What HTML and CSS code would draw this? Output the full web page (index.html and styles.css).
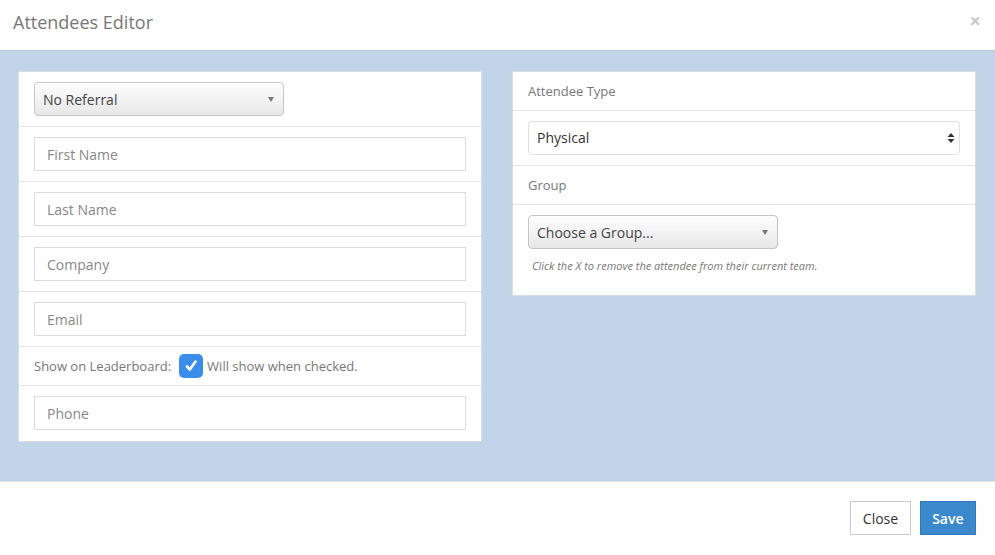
FILE: index.html
```html
<!DOCTYPE html>
<html>
<head lang="en">
    <meta charset="UTF-8">
    <title>Attendees Editor</title>
    <link rel="stylesheet" href="styles.css">
</head>
<body>
<div class="modal">
    <div class="modalHeader">
        <h4 class="modalTitle">Attendees Editor</h4>
        <span class="closeX">&times;</span>
    </div>
    <div class="modalBody">
        <div class="panel leftPanel">
            <div class="row selectRow">
                <div class="fakeSelect referral">No Referral<span class="caret"></span></div>
            </div>
            <div class="row"><div class="input">First Name</div></div>
            <div class="row"><div class="input">Last Name</div></div>
            <div class="row"><div class="input">Company</div></div>
            <div class="row"><div class="input">Email</div></div>
            <div class="row checkRow">
                <span>Show on Leaderboard:</span>
                <span class="checkbox">
                    <svg width="14" height="14" viewBox="0 0 14 14"><path d="M3 7.5 L5.8 10.5 L11.5 2.5" fill="none" stroke="#fff" stroke-width="2.6" stroke-linecap="round" stroke-linejoin="round"/></svg>
                </span>
                <span>Will show when checked.</span>
            </div>
            <div class="row"><div class="input">Phone</div></div>
        </div>
        <div class="panel rightPanel">
            <div class="labelRow">Attendee Type</div>
            <div class="row">
                <div class="nativeSelect">Physical
                    <svg class="updown" width="8" height="12" viewBox="0 0 8 12"><path d="M4 1 L7.5 5 H0.5 Z M4 11 L7.5 7 H0.5 Z" fill="#333"/></svg>
                </div>
            </div>
            <div class="labelRow">Group</div>
            <div class="row groupRow">
                <div class="fakeSelect group">Choose a Group...<span class="caret"></span></div>
                <p class="help">Click the X to remove the attendee from their current team.</p>
            </div>
        </div>
    </div>
    <div class="modalFooter">
        <button class="btn btnDefault">Close</button>
        <button class="btn btnPrimary">Save</button>
    </div>
</div>
</body>
</html>
```

FILE: styles.css
```css
*{
    margin: 0;
    padding: 0;
    box-sizing: border-box;
}
body{
    font-family: "Open Sans", "Liberation Sans", sans-serif;
    color: #555;
    background: #fff;
    width: 995px;
    height: 555px;
    overflow: hidden;
}
.modalHeader{
    height: 50px;
    display: flex;
    align-items: center;
    justify-content: space-between;
    padding: 0 14px 6px 13px;
}
.modalTitle{
    font-size: 18px;
    font-weight: normal;
    color: #777;
}
.closeX{
    color: #c8c8c8;
    font-size: 20px;
    font-weight: bold;
    margin-top: -4px;
}
.modalBody{
    height: 431px;
    background: #c2d4e8;
    border-top: 1px solid #b5c8de;
    display: flex;
    align-items: flex-start;
    gap: 30px;
    padding: 20px 19px 0 18px;
}
.panel{
    width: 464px;
    background: #fff;
    border: 1px solid #d6dde6;
}
.row{
    height: 55px;
    padding: 10px 15px 0 15px;
    border-bottom: 1px solid #e5e5e5;
}
.row:last-child{
    border-bottom: none;
}
.input{
    height: 34px;
    border: 1px solid #ddd;
    padding: 1px 12px 0;
    line-height: 32px;
    font-size: 14px;
    color: #888;
}
.fakeSelect{
    position: relative;
    height: 34px;
    width: 250px;
    border: 1px solid #c5c5c5;
    border-radius: 4px;
    background: linear-gradient(#fdfdfd 0%, #f3f3f3 50%, #e6e6e6 100%);
    padding: 1px 8px 0;
    line-height: 32px;
    font-size: 14px;
    color: #444;
}
.caret{
    position: absolute;
    right: 9px;
    top: 14px;
    border-left: 3.5px solid transparent;
    border-right: 3.5px solid transparent;
    border-top: 5px solid #777;
}
.checkRow{
    height: 39px;
    padding-top: 0;
    display: flex;
    align-items: center;
    font-size: 13px;
    color: #777;
}
.checkbox{
    width: 24px;
    height: 24px;
    margin: 0 4px 0 8px;
    border-radius: 5px;
    background: #3b8deb;
    display: flex;
    align-items: center;
    justify-content: center;
}
.labelRow{
    height: 39px;
    line-height: 38px;
    padding: 0 15px;
    font-size: 13px;
    color: #777;
    border-bottom: 1px solid #e5e5e5;
}
.nativeSelect{
    position: relative;
    height: 34px;
    border: 1px solid #e0e0e0;
    border-radius: 4px;
    padding: 0 8px;
    line-height: 32px;
    font-size: 14px;
    color: #333;
}
.updown{
    position: absolute;
    right: 4px;
    top: 10px;
}
.groupRow{
    height: 90px;
}
.help{
    margin-top: 9px;
    padding-left: 4px;
    font-size: 11px;
    font-style: italic;
    color: #777;
}
.modalFooter{
    height: 74px;
    border-top: 1px solid #e5e5e5;
    display: flex;
    justify-content: flex-end;
    align-items: flex-start;
    gap: 9px;
    padding: 19px 19px 0 0;
}
.btn{
    height: 34px;
    padding: 0 11.5px;
    font-family: "Open Sans", "Liberation Sans", sans-serif;
    font-size: 14px;
    border-radius: 0;
    cursor: pointer;
}
.btnDefault{
    background: #fff;
    border: 1px solid #ccc;
    color: #333;
}
.btnPrimary{
    background: #3c88cd;
    border: 1px solid #3279bb;
    color: #fff;
    font-weight: 600;
}
```
